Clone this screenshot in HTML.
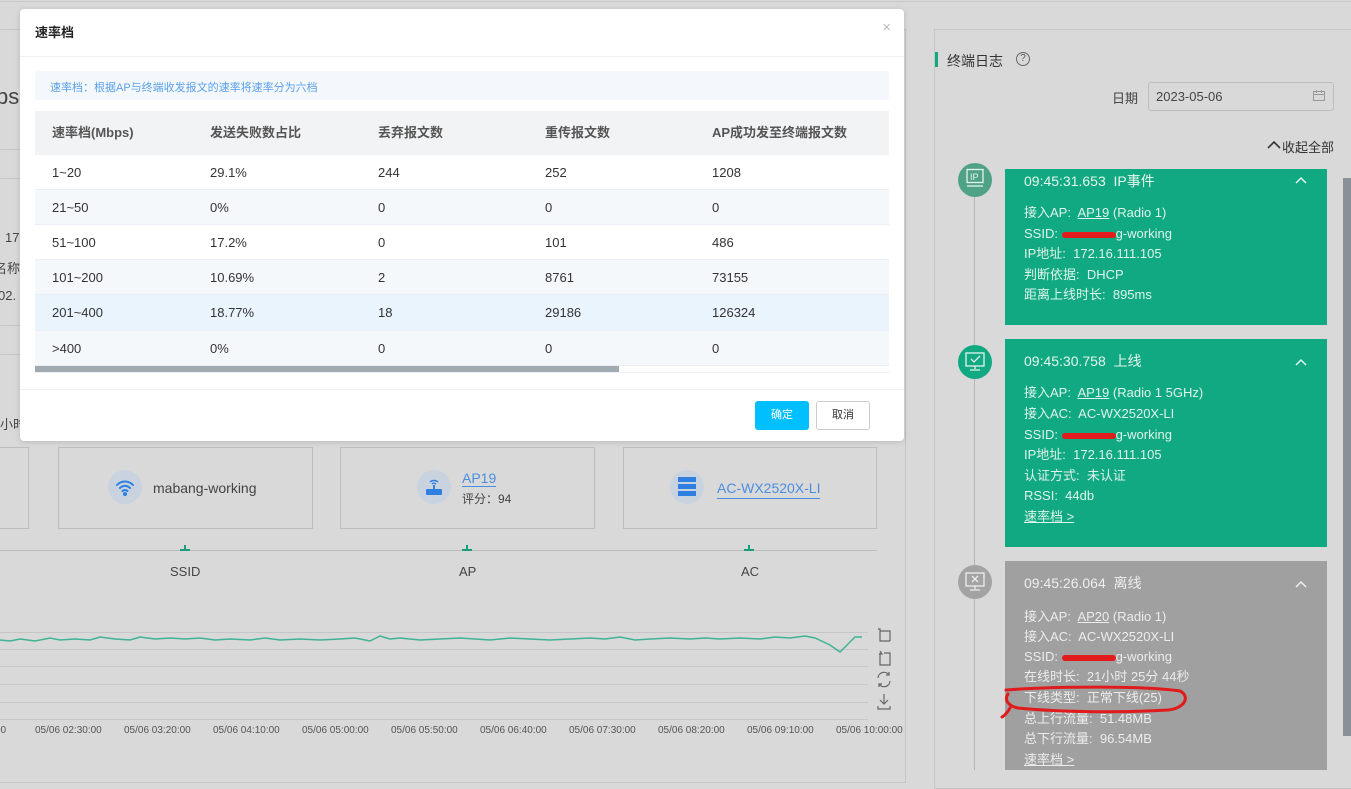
<!DOCTYPE html>
<html><head><meta charset="utf-8"><style>
*{box-sizing:border-box;margin:0;padding:0}
body{width:1351px;height:787px;overflow:hidden;background:#d9d9d9;font-family:"Liberation Sans","Noto Sans CJK SC",sans-serif;position:relative;color:#333}
.a{position:absolute}
.hl{position:absolute;height:1px;background:#c6c6c6}
.modal{position:absolute;left:20px;top:9px;width:884px;height:432px;background:#fff;border-radius:4px;box-shadow:0 1px 6px rgba(0,0,0,.15)}
.row{position:absolute;left:15px;width:854px;height:35px;border-bottom:1px solid #ebeef5;font-size:13px;color:#333}
.row span{position:absolute;top:0;line-height:35px}
.c1{left:17px}.c2{left:175px}.c3{left:343px}.c4{left:510px}.c5{left:677px}
.card{position:absolute;left:1005px;width:322px;color:#dff3ec;font-size:13px}
.card .t{position:absolute;left:19px;font-size:14px;color:#e6f5ef;line-height:20px}
.card .ch{position:absolute;right:20px;font-size:14px;color:#e6f5ef;line-height:20px}
.card .l{position:absolute;left:19px;line-height:20px;white-space:nowrap}
.u{text-decoration:underline}
.red{display:inline-block;width:54px;height:6px;background:#e21c1c;border-radius:3px;vertical-align:middle}
.circ{position:absolute;left:958px;width:34px;height:34px;border-radius:50%}
.box{position:absolute;top:447px;height:82px;border:1px solid #bdbdbd}
.xl{position:absolute;top:725px;font-size:10px;color:#555}
.mk{position:absolute;top:545px;width:10px;height:6px}
.mk i{position:absolute;left:4px;top:0;width:2px;height:6px;background:#1a9d7a}
.mk b{position:absolute;left:0;top:4px;width:10px;height:2px;background:#1a9d7a}
</style></head><body>
<div class="hl" style="left:0;top:1px;width:1351px;background:#c8c8c8"></div>
<div class="hl" style="left:0;top:29px;width:906px"></div>
<div class="hl" style="left:0;top:149px;width:20px"></div>
<div class="hl" style="left:0;top:178px;width:20px"></div>
<div class="hl" style="left:0;top:325px;width:20px"></div>
<div class="hl" style="left:0;top:354px;width:20px"></div>
<div class="a" style="left:905px;top:29px;width:1px;height:754px;background:#c6c6c6"></div>
<div class="a" style="left:-4px;top:84px;font-size:22px;color:#444">ps</div>
<div class="a" style="left:5px;top:230px;font-size:13px;color:#444">17</div>
<div class="a" style="left:-6px;top:258px;font-size:13px;color:#444">名称</div>
<div class="a" style="left:-2px;top:288px;font-size:13px;color:#444">02.</div>
<div class="a" style="left:0;top:414px;font-size:13px;color:#444">小时</div>

<div class="box" style="left:-5px;width:34px"></div>
<div class="box" style="left:58px;width:255px"></div>
<div class="box" style="left:340px;width:255px"></div>
<div class="box" style="left:623px;width:254px"></div>
<div class="a" style="left:108px;top:470px;width:34px;height:34px;border-radius:50%;background:#c9d3df"></div>
<svg class="a" style="left:114px;top:476px" width="22" height="22" viewBox="0 0 22 22" fill="none" stroke="#2f7fe0" stroke-width="2" stroke-linecap="round"><path d="M3 9a11 11 0 0 1 16 0M6 12a7 7 0 0 1 10 0M8.5 15a3.5 3.5 0 0 1 5 0"/><circle cx="11" cy="18" r="1" fill="#2f7fe0"/></svg>
<div class="a" style="left:153px;top:480px;font-size:14px;color:#444">mabang-working</div>
<div class="a" style="left:417px;top:470px;width:34px;height:34px;border-radius:50%;background:#c9d3df"></div>
<svg class="a" style="left:423px;top:474px" width="22" height="24" viewBox="0 0 22 24"><path d="M7 8a6 6 0 0 1 8 0M9 10a3 3 0 0 1 4 0" stroke="#2f7fe0" stroke-width="1.5" fill="none"/><rect x="10" y="11" width="2" height="6" fill="#2f7fe0"/><rect x="3" y="15" width="16" height="6" rx="1" fill="#2f7fe0"/></svg>
<div class="a" style="left:462px;top:470px;font-size:14px;color:#4a8ee0;border-bottom:1px solid #4a8ee0;line-height:16px">AP19</div>
<div class="a" style="left:462px;top:490px;font-size:12px;color:#444">评分：94</div>
<div class="a" style="left:670px;top:470px;width:34px;height:34px;border-radius:50%;background:#c9d3df"></div>
<svg class="a" style="left:677px;top:476px" width="20" height="22"><rect x="1" y="1" width="18" height="5" fill="#2f7fe0"/><rect x="1" y="8" width="18" height="5" fill="#2f7fe0"/><rect x="1" y="15" width="18" height="5" fill="#2f7fe0"/></svg>
<div class="a" style="left:717px;top:479px;font-size:14px;color:#4a8ee0;border-bottom:1px solid #4a8ee0;line-height:19px">AC-WX2520X-LI</div>
<div class="hl" style="left:0;top:550px;width:877px;background:#bcbcbc"></div>
<div class="mk" style="left:180px"><i></i><b></b></div>
<div class="mk" style="left:462px"><i></i><b></b></div>
<div class="mk" style="left:744px"><i></i><b></b></div>
<div class="a" style="left:170px;top:564px;font-size:13px;color:#444">SSID</div>
<div class="a" style="left:459px;top:564px;font-size:13px;color:#444">AP</div>
<div class="a" style="left:741px;top:564px;font-size:13px;color:#444">AC</div>
<div class="hl" style="left:0;top:632px;width:868px"></div>
<div class="hl" style="left:0;top:649px;width:868px"></div>
<div class="hl" style="left:0;top:666px;width:868px"></div>
<div class="hl" style="left:0;top:684px;width:868px"></div>
<div class="hl" style="left:0;top:702px;width:868px"></div>
<div class="hl" style="left:0;top:719px;width:868px"></div>
<svg class="a" style="left:0;top:625px" width="870" height="30"><path d="M0 15 L10 16 L20 14 L35 16 L50 13 L60 15 L75 14 L90 15 L100 12 L115 14 L130 15 L140 12 L155 14 L170 13 L185 14 L200 13 L215 15 L230 14 L250 15 L265 13 L280 15 L300 14 L320 15 L340 14 L355 13 L370 16 L380 11 L390 14 L400 13 L420 15 L440 14 L460 13 L475 14 L490 15 L510 13 L530 14 L550 15 L570 14 L590 13 L605 14 L620 12 L635 15 L650 14 L670 13 L690 14 L705 13 L720 14 L740 13 L760 14 L775 12 L790 13 L805 11 L815 13 L830 20 L840 27 L850 17 L855 12 L862 12" fill="none" stroke="#3fb394" stroke-width="1.5"/></svg>
<svg class="a" style="left:875px;top:626px" width="18" height="86" fill="none" stroke="#666" stroke-width="1.2"><path d="M3 3h2v12h10M5 5h10v10"/><path d="M4 28h3l-2-3M5 27v12h10V27H9"/><path d="M3 52a6 6 0 0 1 11-3M15 55a6 6 0 0 1-11 3M14 46v3h-3M4 61v-3h3"/><path d="M9 68v10M5 74l4 4 4-4M3 80v3h12v-3"/></svg>
<div class="xl" style="left:-5px">00</div>
<div class="xl" style="left:35px">05/06 02:30:00</div>
<div class="xl" style="left:124px">05/06 03:20:00</div>
<div class="xl" style="left:213px">05/06 04:10:00</div>
<div class="xl" style="left:302px">05/06 05:00:00</div>
<div class="xl" style="left:391px">05/06 05:50:00</div>
<div class="xl" style="left:480px">05/06 06:40:00</div>
<div class="xl" style="left:569px">05/06 07:30:00</div>
<div class="xl" style="left:658px">05/06 08:20:00</div>
<div class="xl" style="left:747px">05/06 09:10:00</div>
<div class="xl" style="left:836px">05/06 10:00:00</div>
<div class="hl" style="left:0;top:782px;width:906px"></div>

<!-- right panel -->
<div class="a" style="left:934px;top:29px;width:420px;height:760px;border:1px solid #c6c6c6;border-right:0"></div>
<div class="a" style="left:935px;top:52px;width:3px;height:15px;background:#10a981"></div>
<div class="a" style="left:947px;top:51px;font-size:14px;color:#333">终端日志</div>
<div class="a" style="left:1016px;top:52px;width:14px;height:14px;border:1px solid #666;border-radius:50%;font-size:10px;text-align:center;line-height:12px;color:#555">?</div>
<div class="a" style="left:1112px;top:88px;font-size:13px;color:#444">日期</div>
<div class="a" style="left:1148px;top:82px;width:186px;height:29px;border:1px solid #bdbdbd;border-radius:3px;font-size:13px;color:#444;padding:6px 7px">2023-05-06</div>
<svg class="a" style="left:1312px;top:89px" width="14" height="13" fill="none" stroke="#999"><rect x="1.5" y="2.5" width="11" height="9"/><path d="M1.5 5.5h11M4.5 1v3M9.5 1v3"/></svg>
<svg class="a" style="left:1267px;top:140px" width="14" height="10" fill="none" stroke="#333" stroke-width="1.6"><path d="M1 8l6-6 6 6"/></svg>
<div class="a" style="left:1282px;top:137px;font-size:13px;color:#333">收起全部</div>
<div class="a" style="left:974px;top:185px;width:1px;height:585px;background:#b5b5b5"></div>
<div class="a" style="left:1343px;top:178px;width:8px;height:558px;background:#8a9097"></div>

<div class="circ" style="top:163px;background:#4fa285"></div>
<svg class="a" style="left:964px;top:168px" width="22" height="22" fill="none" stroke="#e6f3ee" stroke-width="1.3"><rect x="3" y="1.5" width="16" height="13"/><path d="M3 18h16"/><text x="6" y="12" font-size="9" fill="#e6f3ee" stroke="none" font-family="Liberation Sans">IP</text></svg>
<div class="card" style="top:169px;height:156px;background:#10a981">
<div class="t" style="top:2px">09:45:31.653&nbsp; IP事件</div>
<svg class="a" style="right:20px;top:7px" width="12" height="8" fill="none" stroke="#e6f5ef" stroke-width="1.5"><path d="M1 7l5-5 5 5"/></svg>
<div class="l" style="top:34px">接入AP:&nbsp; <span class="u">AP19</span> (Radio 1)</div>
<div class="l" style="top:55px">SSID: <span class="red"></span>g-working</div>
<div class="l" style="top:75px">IP地址:&nbsp; 172.16.111.105</div>
<div class="l" style="top:96px">判断依据:&nbsp; DHCP</div>
<div class="l" style="top:116px">距离上线时长:&nbsp; 895ms</div>
</div>

<div class="circ" style="top:345px;background:#10a981"></div>
<svg class="a" style="left:964px;top:351px" width="22" height="22" fill="none" stroke="#e6f3ee" stroke-width="1.3"><rect x="2" y="2" width="18" height="13"/><path d="M7 8l3 3 6-6M11 15v3M6 19h10"/></svg>
<div class="card" style="top:339px;height:208px;background:#10a981">
<div class="t" style="top:12px">09:45:30.758&nbsp; 上线</div>
<svg class="a" style="right:20px;top:19px" width="12" height="8" fill="none" stroke="#e6f5ef" stroke-width="1.5"><path d="M1 7l5-5 5 5"/></svg>
<div class="l" style="top:44px">接入AP:&nbsp; <span class="u">AP19</span> (Radio 1 5GHz)</div>
<div class="l" style="top:65px">接入AC:&nbsp; AC-WX2520X-LI</div>
<div class="l" style="top:86px">SSID: <span class="red"></span>g-working</div>
<div class="l" style="top:106px">IP地址:&nbsp; 172.16.111.105</div>
<div class="l" style="top:127px">认证方式:&nbsp; 未认证</div>
<div class="l" style="top:147px">RSSI:&nbsp; 44db</div>
<div class="l u" style="top:168px">速率档 &gt;</div>
</div>

<div class="circ" style="top:565px;background:#a3a3a3"></div>
<svg class="a" style="left:964px;top:571px" width="22" height="22" fill="none" stroke="#eee" stroke-width="1.3"><rect x="2" y="2" width="18" height="13"/><path d="M8 5l6 6M14 5l-6 6M11 15v3M6 19h10"/></svg>
<div class="card" style="top:561px;height:209px;background:#a0a0a0;color:#ececec">
<div class="t" style="top:12px;color:#eee">09:45:26.064&nbsp; 离线</div>
<svg class="a" style="right:20px;top:19px" width="12" height="8" fill="none" stroke="#eee" stroke-width="1.5"><path d="M1 7l5-5 5 5"/></svg>
<div class="l" style="top:46px">接入AP:&nbsp; <span class="u">AP20</span> (Radio 1)</div>
<div class="l" style="top:66px">接入AC:&nbsp; AC-WX2520X-LI</div>
<div class="l" style="top:86px">SSID: <span class="red"></span>g-working</div>
<div class="l" style="top:106px">在线时长:&nbsp; 21小时 25分 44秒</div>
<div class="l" style="top:127px">下线类型:&nbsp; 正常下线(25)</div>
<div class="l" style="top:148px">总上行流量:&nbsp; 51.48MB</div>
<div class="l" style="top:168px">总下行流量:&nbsp; 96.54MB</div>
<div class="l u" style="top:189px">速率档 &gt;</div>
</div>
<svg class="a" style="left:998px;top:684px" width="195" height="36" fill="none" stroke="#e01b1b" stroke-width="3" stroke-linecap="round"><path d="M8 6 C60 2 150 2 182 7 C192 12 188 24 170 26 C120 29 60 28 20 24 C10 22 6 16 10 10 M12 24 C10 28 6 32 4 33"/></svg>

<!-- modal -->
<div class="modal">
<div class="a" style="left:15px;top:13px;font-size:13px;font-weight:bold;color:#222">速率档</div>
<div class="a" style="right:13px;top:10px;font-size:15px;color:#bbb">×</div>
<div class="a" style="left:0;top:47px;width:884px;height:1px;background:#eef0f6"></div>
<div class="a" style="left:15px;top:62px;width:854px;height:29px;background:#f4f8fd;border-radius:3px;font-size:11px;color:#5aa0e8;padding:8px 0 0 15px">速率档：根据AP与终端收发报文的速率将速率分为六档</div>
<div class="a" style="left:15px;top:102px;width:854px;height:44px;background:#f2f3f5;font-size:13px;font-weight:bold;color:#555">
<span class="a c1" style="line-height:44px">速率档(Mbps)</span><span class="a c2" style="line-height:44px">发送失败数占比</span><span class="a c3" style="line-height:44px">丢弃报文数</span><span class="a c4" style="line-height:44px">重传报文数</span><span class="a c5" style="line-height:44px">AP成功发至终端报文数</span></div>
<div class="row" style="top:146px;background:#fff"><span class="c1">1~20</span><span class="c2">29.1%</span><span class="c3">244</span><span class="c4">252</span><span class="c5">1208</span></div>
<div class="row" style="top:181px;background:#f5f8fb"><span class="c1">21~50</span><span class="c2">0%</span><span class="c3">0</span><span class="c4">0</span><span class="c5">0</span></div>
<div class="row" style="top:216px;background:#fff"><span class="c1">51~100</span><span class="c2">17.2%</span><span class="c3">0</span><span class="c4">101</span><span class="c5">486</span></div>
<div class="row" style="top:251px;background:#f5f8fb"><span class="c1">101~200</span><span class="c2">10.69%</span><span class="c3">2</span><span class="c4">8761</span><span class="c5">73155</span></div>
<div class="row" style="top:286px;background:#e9f4fd;height:36px"><span class="c1">201~400</span><span class="c2">18.77%</span><span class="c3">18</span><span class="c4">29186</span><span class="c5">126324</span></div>
<div class="row" style="top:322px;background:#f5f8fb"><span class="c1">&gt;400</span><span class="c2">0%</span><span class="c3">0</span><span class="c4">0</span><span class="c5">0</span></div>
<div class="a" style="left:15px;top:357px;width:584px;height:6px;background:#a1aab1"></div>
<div class="a" style="left:15px;top:363px;width:854px;height:1px;background:#ebeef5"></div>
<div class="a" style="left:0;top:380px;width:884px;height:1px;background:#eef0f6"></div>
<div class="a" style="left:735px;top:392px;width:54px;height:29px;background:#00bfff;border-radius:3px;color:#fff;font-size:11px;text-align:center;line-height:29px">确定</div>
<div class="a" style="left:796px;top:392px;width:54px;height:29px;border:1px solid #ccc;border-radius:3px;color:#333;font-size:11px;text-align:center;line-height:27px">取消</div>
</div>
</body></html>
